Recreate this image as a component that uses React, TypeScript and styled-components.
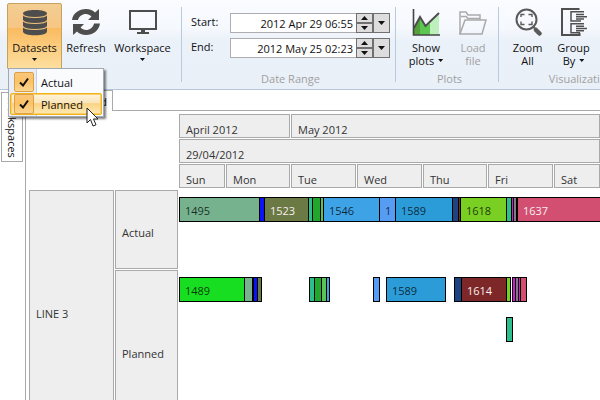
import React from "react";
import styled, { createGlobalStyle, css } from "styled-components";

const GlobalStyle = createGlobalStyle`
  * { box-sizing: border-box; }
  body { margin: 0; background: #fff; font-family: "Open Sans", "Noto Sans", sans-serif; font-size: 11px; line-height: 13px; color: #111; }
  button, input { font: inherit; color: inherit; }
`;

const Shell = styled.div`
  display: flex;
  flex-direction: column;
  height: 100vh;
  overflow: hidden;
`;

const Ribbon = styled.header`
  display: flex;
  flex: none;
  height: 90px;
  padding-left: 7px;
  overflow: hidden;
  border-bottom: 1px solid #b4c6da;
  background: linear-gradient(#fafcff 0%, #f5f8fd 32%, #ebf1f9 46%, #eaf0f8 100%);
`;

const Group = styled.section<{ $pad: string }>`
  display: flex;
  flex-direction: column;
  flex: none;
  position: relative;
  padding: ${(p) => p.$pad};
  &::after {
    content: "";
    position: absolute;
    right: 0;
    top: 7px;
    height: 75px;
    width: 1px;
    background: #b9cadd;
  }
`;

const Tools = styled.div<{ $gap?: number }>`
  display: flex;
  flex: none;
  height: 66px;
  gap: ${(p) => p.$gap ?? 0}px;
`;

const GroupTitle = styled.div`
  margin-top: 3px;
  text-align: center;
  color: #a0a0a0;
  white-space: nowrap;
`;

const Tool = styled.button<{ $w: number; $active?: boolean }>`
  display: flex;
  flex-direction: column;
  align-items: center;
  gap: 5px;
  width: ${(p) => p.$w}px;
  height: 66px;
  padding: 4px 0 0;
  border: 1px solid transparent;
  background: none;
  line-height: 13px;
  white-space: nowrap;
  ${(p) =>
    p.$active &&
    css`
      border-color: #c7a25c;
      border-radius: 2px 2px 0 0;
      background: linear-gradient(#f3cd92 0%, #f6c685 37%, #fabb60 38%, #fddf9f 100%);
    `}
  &:disabled { color: #a0a0a0; }
`;

const ToolText = styled.span`
  display: flex;
  flex-direction: column;
  align-items: center;
`;

const Line = styled.span`
  display: flex;
  align-items: center;
  gap: 4px;
`;

const Caret = styled.i<{ $top?: number }>`
  width: 5px;
  height: 3px;
  margin-top: ${(p) => p.$top ?? 0}px;
  background: #111;
  clip-path: polygon(0 0, 100% 0, 50% 100%);
`;

const Dates = styled.div`
  display: flex;
  flex-direction: column;
  gap: 5px;
  height: 66px;
  padding-top: 10px;
`;

const DateRow = styled.div`
  display: flex;
  height: 20px;
  width: 199px;
`;

const DateLabel = styled.label`
  width: 39px;
  padding-top: 2px;
`;

const DateInput = styled.input`
  flex: 1;
  min-width: 0;
  padding: 0 3px 0 0;
  border: 1px solid #abadb3;
  border-right: 0;
  background: #fff;
  text-align: right;
  outline: none;
`;

const Spin = styled.div`
  display: flex;
  flex-direction: column;
  width: 17px;
`;

const SmallButton = styled.button`
  display: flex;
  align-items: center;
  justify-content: center;
  flex: 1;
  max-width: 17px;
  width: 17px;
  padding: 0;
  border: 1px solid #707070;
  background: #dddddd;
`;

const Menu = styled.div`
  position: absolute;
  left: 8px;
  top: 68px;
  z-index: 2;
  display: flex;
  flex-direction: column;
  width: 96px;
  padding: 2px 1px 1px;
  border: 1px solid #a2a9b3;
  background: linear-gradient(90deg, #e9eef6 27px, #c7d3e2 27px, #c7d3e2 28px, #fafbfd 28px);
  box-shadow: 2px 2px 2px rgba(0, 0, 0, 0.5);
`;

const MenuItem = styled.label<{ $hot?: boolean }>`
  display: flex;
  align-items: center;
  gap: 7px;
  height: 22px;
  padding-left: 3px;
  border: 1px solid transparent;
  ${(p) =>
    p.$hot &&
    css`
      border-color: #f2b21c;
      border-radius: 2px;
      background: linear-gradient(#fdf3dc 0%, #fbe5b8 45%, #f9d384 48%, #fdeab6 100%);
      box-shadow: inset 0 0 0 1px #fbcf6a;
    `}
`;

const CheckCell = styled.span`
  display: grid;
  place-items: center;
  width: 20px;
  height: 20px;
  & > * { grid-area: 1 / 1; }
  & > svg { pointer-events: none; z-index: 1; }
`;

const CheckBox = styled.input`
  appearance: none;
  width: 20px;
  height: 20px;
  margin: 0;
  border: 1px solid #dda047;
  border-radius: 2px;
  background: linear-gradient(#f9c77c, #fbc266 45%, #fcd692);
`;

const Pointer = styled.svg`
  position: absolute;
  left: 86px;
  top: 107px;
  z-index: 3;
`;

const Body = styled.main`
  display: flex;
  flex: 1;
  min-height: 0;
`;

const SideBar = styled.nav`
  flex: none;
  width: 25px;
  padding: 2px 0 0 1px;
`;

const SideTab = styled.button`
  display: flex;
  align-items: center;
  justify-content: flex-end;
  width: 22px;
  height: 70px;
  padding: 0 0 3px;
  border: 1px solid #a9a9a9;
  background: #fff;
  writing-mode: vertical-rl;
`;

const Document = styled.section`
  display: flex;
  flex-direction: column;
  flex: 1;
  min-width: 0;
`;

const TabStrip = styled.div`
  display: flex;
  flex: none;
  height: 21px;
`;

const Tab = styled.button`
  width: 88px;
  padding: 0 5px;
  border: 1px solid #a9a9a9;
  border-bottom: 0;
  background: #fff;
  text-align: right;
`;

const TabFill = styled.div`
  flex: 1;
  border-bottom: 1px solid #a9a9a9;
`;

const Chart = styled.div`
  display: grid;
  grid-template-columns: 86px 64px minmax(0, 1fr);
  grid-template-rows: 76px 80px 162px;
  flex: 1;
  padding: 3px 0 0 3px;
  overflow: hidden;
  border-left: 1px solid #a9a9a9;
  color: #333;
`;

const Calendar = styled.div`
  grid-column: 3;
  display: flex;
  flex-direction: column;
`;

const CalendarRow = styled.div`
  display: flex;
  height: 25px;
`;

const Cell = styled.div<{ $w?: number }>`
  flex: ${(p) => (p.$w ? "none" : "1")};
  width: ${(p) => (p.$w ? p.$w + "px" : "auto")};
  margin-right: ${(p) => (p.$w ? 1 : 0)}px;
  margin-bottom: 1px;
  padding: 8px 0 0 6px;
  overflow: hidden;
  border: 1px solid #a9a9a9;
  background: #eee;
`;

const RowHead = styled.div<{ $rows?: number }>`
  grid-row: span ${(p) => p.$rows ?? 1};
  display: flex;
  align-items: center;
  margin: 0 1px 1px 0;
  padding: 5px 0 0 6px;
  border: 1px solid #a9a9a9;
  background: #eee;
`;

const Lanes = styled.div`
  display: flex;
  flex-direction: column;
  gap: 15px;
  min-width: 0;
  padding-top: 7px;
`;

const Lane = styled.div`
  display: flex;
  height: 25px;
  overflow: hidden;
`;

const Bar = styled.div<{ $gap: number; $w: number; $fill: string; $light?: boolean }>`
  flex: none;
  width: ${(p) => p.$w}px;
  margin-left: ${(p) => p.$gap}px;
  padding-top: 6px;
  text-indent: 5px;
  overflow: hidden;
  border: 1px solid #000;
  background: ${(p) => p.$fill};
  color: ${(p) => (p.$light ? "#f6f0ee" : "rgba(0, 0, 0, 0.76)")};
`;

type Job = { from: number; to: number; fill: string; label?: string; light?: boolean };

const actual: Job[] = [
  { from: 0, to: 81, fill: "#76b28e", label: "1495" },
  { from: 80, to: 86, fill: "#0a14f5" },
  { from: 85, to: 130, fill: "#6b7945", label: "1523", light: true },
  { from: 129, to: 134, fill: "#2cbf8c" },
  { from: 133, to: 142, fill: "#22a62e" },
  { from: 141, to: 145, fill: "#58c454" },
  { from: 144, to: 201, fill: "#3ea3e6", label: "1546" },
  { from: 200, to: 217, fill: "#559cf2", label: "1" },
  { from: 216, to: 274, fill: "#2c9cd8", label: "1589" },
  { from: 273, to: 280, fill: "#1d4380" },
  { from: 279, to: 282, fill: "#7b2828" },
  { from: 281, to: 328, fill: "#7ad022", label: "1618" },
  { from: 327, to: 333, fill: "#2cbf8c" },
  { from: 332, to: 335, fill: "#d914d9" },
  { from: 334, to: 338, fill: "#7d7d7d" },
  { from: 338, to: 620, fill: "#d24f72", label: "1637", light: true },
];

const planned: Job[] = [
  { from: 0, to: 66, fill: "#18de22", label: "1489" },
  { from: 65, to: 74, fill: "#76b28e" },
  { from: 74, to: 79, fill: "#0a14f5" },
  { from: 78, to: 83, fill: "#6b7945" },
  { from: 130, to: 136, fill: "#2cbf8c" },
  { from: 135, to: 143, fill: "#22a62e" },
  { from: 142, to: 148, fill: "#58c454" },
  { from: 147, to: 151, fill: "#3ea3e6" },
  { from: 194, to: 201, fill: "#559cf2" },
  { from: 207, to: 267, fill: "#2c9cd8", label: "1589" },
  { from: 275, to: 283, fill: "#1d4380" },
  { from: 282, to: 328, fill: "#7e2729", label: "1614", light: true },
  { from: 327, to: 332, fill: "#7ad022" },
  { from: 333, to: 337, fill: "#d914d9" },
  { from: 336, to: 340, fill: "#7d7d7d" },
  { from: 339, to: 342, fill: "#d914d9" },
  { from: 341, to: 348, fill: "#d24f72" },
];

const overflowLane: Job[] = [{ from: 327, to: 334, fill: "#2cbf8c" }];

const Jobs = ({ jobs }: { jobs: Job[] }) => (
  <Lane>
    {jobs.map((j, i) => (
      <Bar key={i} $gap={j.from - (i ? jobs[i - 1].to : 0)} $w={j.to - j.from} $fill={j.fill} $light={j.light}>
        {j.label}
      </Bar>
    ))}
  </Lane>
);

const DatabaseIcon = () => (
  <svg width="26" height="28" viewBox="0 0 26 28">
    <path d="M1 5.500C1 3.200 6 2 13 2s12 1.200 12 3.500v18c0 2.300-5 3.700-12 3.700S1 25.800 1 23.500z" fill="#4d4d4d" />
    <path d="M1 6.500c1 2 6 3 12 3s11-1 12-3M1 12.500c1 2 6 3 12 3s11-1 12-3M1 18.500c1 2 6 3 12 3s11-1 12-3" fill="none" stroke="#f0c27c" strokeWidth="1.200" />
  </svg>
);

const RefreshIcon = () => (
  <svg width="30" height="28" viewBox="0 0 30 28" fill="#4d4d4d">
    <path d="M1 12C2 5 8 1 15 1c4 0 7 1.500 9 3.500L28 1v11H17l3.500-3.500C19 7 17 6 15 6c-4 0-7 2.500-8 6z" />
    <path d="M29 15.500C28 22.500 22 27 15 27c-4 0-7-1.500-9-3.500L2 27V16h11l-3.500 3.500C11 21 13 22 15 22c4 0 7-2.500 8-6.500z" />
  </svg>
);

const MonitorIcon = () => (
  <svg width="30" height="28" viewBox="0 0 30 28">
    <rect x="2" y="3" width="26" height="18" fill="none" stroke="#4d4d4d" strokeWidth="2" />
    <path d="M13 21h4v3h4v2H9v-2h4z" fill="#4d4d4d" />
  </svg>
);

const PlotIcon = () => (
  <svg width="28" height="28" viewBox="0 0 28 28">
    <path d="M2 20l6-11v18H2z" fill="#53a13b" />
    <path d="M8 9l6 9 4-3v12H8z" fill="#5dc650" />
    <path d="M18 14l9-8v21h-9z" fill="#bdf0bd" />
    <path d="M2 20L8 9l5.500 9L27 5" fill="none" stroke="#4d4d4d" strokeWidth="2" />
    <path d="M1.500 1v26H28" fill="none" stroke="#444" strokeWidth="1.600" />
  </svg>
);

const FolderIcon = () => (
  <svg width="30" height="28" viewBox="0 0 30 28" fill="none" stroke="#aaa" strokeWidth="1.500">
    <path d="M2 26V4h6l2 3h12v5M3 8.500h5l2 2h12" />
    <path d="M2 26l5-14h21l-4 14z" />
  </svg>
);

const ZoomIcon = () => (
  <svg width="30" height="28" viewBox="0 0 30 28" fill="none">
    <circle cx="13.500" cy="11.500" r="10" stroke="#5a5a5a" strokeWidth="2" />
    <path d="M8 9V6.500h3.500M15.500 6.500H19V9M19 13.500v3h-3.500M11.500 16.500H8v-3" stroke="#5a5a5a" strokeWidth="1.400" />
    <path d="M20 18.500l2 2" stroke="#5a5a5a" strokeWidth="2" />
    <path d="M23 22l3.500 3.500" stroke="#5a5a5a" strokeWidth="4.500" strokeLinecap="round" />
  </svg>
);

const GroupIcon = () => (
  <svg width="28" height="28" viewBox="0 0 28 28" fill="none" stroke="#505050">
    <path d="M19.500 1H2v26h17.500V25" strokeWidth="2" />
    <path d="M24 3.700H11v9.300h10M24 15.700H11v9h9" strokeWidth="1.500" />
    <path d="M16 6.500h8M16 8.800h11M16 11h8M16 18.200h8M16 20.500h11M16 22.700h8" strokeWidth="1.400" />
  </svg>
);

const CheckIcon = () => (
  <svg width="10" height="10" viewBox="0 0 10 10">
    <path d="M1 5.500L4 8.500 9 1.500" fill="none" stroke="#111" strokeWidth="2" />
  </svg>
);

const ArrowUp = () => (
  <svg width="7" height="4" viewBox="0 0 7 4"><path d="M0 4L3.500 0 7 4z" fill="#111" /></svg>
);
const ArrowDown = () => (
  <svg width="7" height="4" viewBox="0 0 7 4"><path d="M0 0h7L3.500 4z" fill="#111" /></svg>
);

const DateField = ({ id, label, value }: { id: string; label: string; value: string }) => (
  <DateRow>
    <DateLabel htmlFor={id}>{label}</DateLabel>
    <DateInput id={id} defaultValue={value} />
    <Spin>
      <SmallButton aria-label={label + " later"}><ArrowUp /></SmallButton>
      <SmallButton aria-label={label + " earlier"}><ArrowDown /></SmallButton>
    </Spin>
    <SmallButton aria-label={label + " calendar"}><ArrowDown /></SmallButton>
  </DateRow>
);

const days: [string, number?][] = [["Sun", 46], ["Mon", 64], ["Tue", 65], ["Wed", 65], ["Thu", 64], ["Fri", 65], ["Sat"]];

export default function App() {
  return (
    <Shell>
      <GlobalStyle />
      <Ribbon>
        <Group $pad="3px 7px 0 0">
          <Tools $gap={1}>
            <Tool $w={55} $active>
              <DatabaseIcon />
              <ToolText>Datasets<Caret $top={4} /></ToolText>
            </Tool>
            <Tool $w={46}>
              <RefreshIcon />
              <ToolText>Refresh</ToolText>
            </Tool>
            <Tool $w={65}>
              <MonitorIcon />
              <ToolText>Workspace<Caret $top={4} /></ToolText>
            </Tool>
          </Tools>
        </Group>
        <Group $pad="3px 6px 0 9px">
          <Dates>
            <DateField id="start" label="Start:" value="2012 Apr 29 06:55" />
            <DateField id="end" label="End:" value="2012 May 25 02:23" />
          </Dates>
          <GroupTitle>Date Range</GroupTitle>
        </Group>
        <Group $pad="3px 3px 0 7px">
          <Tools $gap={1}>
            <Tool $w={46}>
              <PlotIcon />
              <ToolText>Show<Line>plots <Caret /></Line></ToolText>
            </Tool>
            <Tool $w={46} disabled>
              <FolderIcon />
              <ToolText>Load<span>file</span></ToolText>
            </Tool>
          </Tools>
          <GroupTitle>Plots</GroupTitle>
        </Group>
        <Group $pad="3px 6px 0 6px">
          <Tools $gap={1}>
            <Tool $w={45}>
              <ZoomIcon />
              <ToolText>Zoom<span>All</span></ToolText>
            </Tool>
            <Tool $w={45}>
              <GroupIcon />
              <ToolText>Group<Line>By <Caret /></Line></ToolText>
            </Tool>
            <Tool $w={60} aria-label="More" />
          </Tools>
          <GroupTitle>Visualization</GroupTitle>
        </Group>
      </Ribbon>
      <Menu>
        <MenuItem>
          <CheckCell><CheckBox type="checkbox" defaultChecked /><CheckIcon /></CheckCell>
          Actual
        </MenuItem>
        <MenuItem $hot>
          <CheckCell><CheckBox type="checkbox" defaultChecked /><CheckIcon /></CheckCell>
          Planned
        </MenuItem>
      </Menu>
      <Pointer width="14" height="21" viewBox="0 0 14 21">
        <path d="M1 1v15l3.500-3.500L7 19l3-1.200L7.500 12H12z" fill="#fff" stroke="#222" />
      </Pointer>
      <Body>
        <SideBar>
          <SideTab>Workspaces</SideTab>
        </SideBar>
        <Document>
          <TabStrip>
            <Tab>Dashboard</Tab>
            <TabFill />
          </TabStrip>
          <Chart>
            <Calendar>
              <CalendarRow><Cell $w={111}>April 2012</Cell><Cell>May 2012</Cell></CalendarRow>
              <CalendarRow><Cell>29/04/2012</Cell></CalendarRow>
              <CalendarRow>
                {days.map(([d, w]) => <Cell key={d} $w={w}>{d}</Cell>)}
              </CalendarRow>
            </Calendar>
            <RowHead $rows={2}>LINE 3</RowHead>
            <RowHead>Actual</RowHead>
            <Lanes><Jobs jobs={actual} /></Lanes>
            <RowHead>Planned</RowHead>
            <Lanes>
              <Jobs jobs={planned} />
              <Jobs jobs={overflowLane} />
            </Lanes>
          </Chart>
        </Document>
      </Body>
    </Shell>
  );
}
